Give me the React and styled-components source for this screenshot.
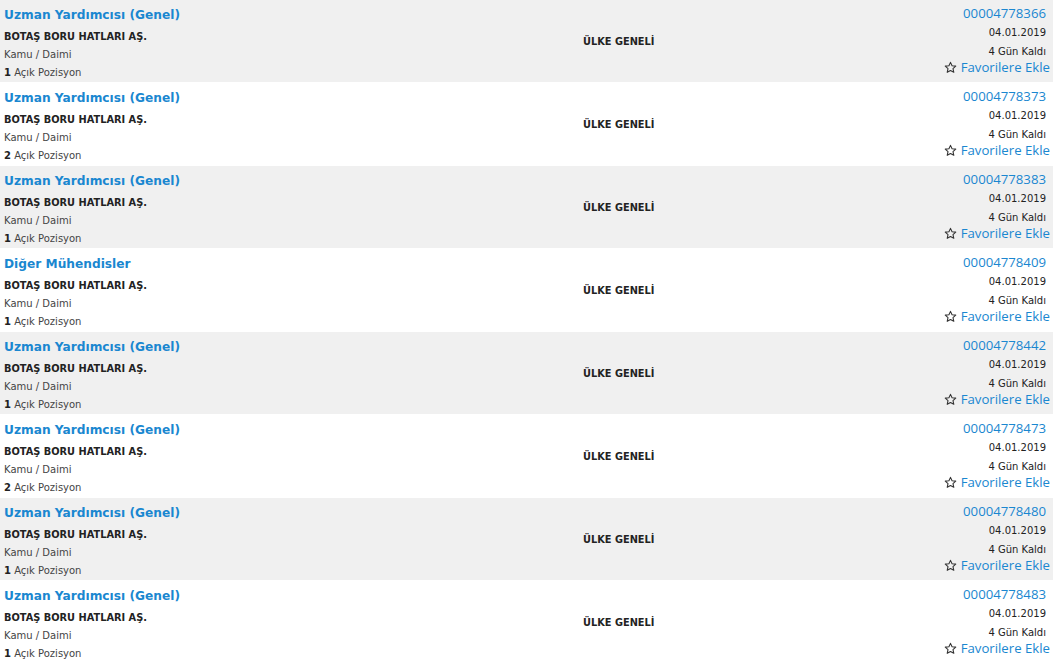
import React from "react";
import styled, { createGlobalStyle } from "styled-components";

const Global = createGlobalStyle`
  html, body { margin: 0; padding: 0; background: #fff; }
  body { font-family: "DejaVu Sans", Verdana, sans-serif; color: #222; }
`;

const List = styled.div`
  width: 1053px;
  display: flex;
  flex-direction: column;
`;

const Row = styled.div`
  height: 82px;
  border-bottom: 1px solid #fff;
  background: ${(p) => (p.$alt ? "#f0f0f0" : "#fff")};
  display: grid;
  grid-template-columns: 583px 1fr auto;
  align-items: stretch;
`;

const Left = styled.div`
  padding: 6px 0 0 4px;
  display: flex;
  flex-direction: column;
`;

const Title = styled.a`
  font-family: "DejaVu Sans", Verdana, sans-serif;
  font-weight: bold;
  font-size: 12.2px;
  color: #1a87d0;
  text-decoration: none;
  line-height: 19px;
  height: 22px;
`;

const Small = styled.div`
  font-size: ${(p) => (p.$strong ? "9.8px" : "10px")};
  line-height: 18px;
  color: ${(p) => (p.$strong ? "#222" : "#444")};
  font-weight: ${(p) => (p.$strong ? "bold" : "normal")};
  b { color: #222; font-size: 10px; }
`;

const Middle = styled.div`
  display: flex;
  align-items: center;
  font-size: 9.8px;
  font-weight: bold;
  color: #222;
`;

const Right = styled.div`
  padding: 4px 3px 0 0;
  display: flex;
  flex-direction: column;
  align-items: flex-end;
`;

const Code = styled.a`
  font-family: "Open Sans", sans-serif;
  font-size: 13.2px;
  line-height: 18px;
  height: 18px;
  padding-right: 4px;
  color: #1a87d0;
  text-decoration: none;
`;

const Meta = styled.div`
  font-size: 10px;
  line-height: 18px;
  color: #222;
  padding-right: 4px;
  margin-top: ${(p) => p.$mt || 0}px;
`;

const Fav = styled.a`
  font-family: "Open Sans", sans-serif;
  font-size: 13.2px;
  line-height: 18px;
  margin-top: -3px;
  color: #1a87d0;
  text-decoration: none;
  display: flex;
  align-items: center;
  gap: 4px;
  svg { display: block; }
`;

const Star = () => (
  <svg width="13" height="13" viewBox="0 0 24 24" fill="none" stroke="#333" strokeWidth="2" strokeLinejoin="round">
    <path d="M12 2.5l2.9 6.3 6.8.7-5.1 4.6 1.5 6.8L12 17.4 5.9 20.9l1.5-6.8L2.3 9.5l6.8-.7z" />
  </svg>
);

const items = [
  { t: "Uzman Yardımcısı (Genel)", n: 1, c: "00004778366" },
  { t: "Uzman Yardımcısı (Genel)", n: 2, c: "00004778373" },
  { t: "Uzman Yardımcısı (Genel)", n: 1, c: "00004778383" },
  { t: "Diğer Mühendisler", n: 1, c: "00004778409" },
  { t: "Uzman Yardımcısı (Genel)", n: 1, c: "00004778442" },
  { t: "Uzman Yardımcısı (Genel)", n: 2, c: "00004778473" },
  { t: "Uzman Yardımcısı (Genel)", n: 1, c: "00004778480" },
  { t: "Uzman Yardımcısı (Genel)", n: 1, c: "00004778483" },
];

export default function App() {
  return (
    <>
      <Global />
      <List>
        {items.map((it, i) => (
          <Row key={i} $alt={i % 2 === 0}>
            <Left>
              <Title href="#">{it.t}</Title>
              <Small $strong>BOTAŞ BORU HATLARI AŞ.</Small>
              <Small>Kamu / Daimi</Small>
              <Small><b>{it.n}</b> Açık Pozisyon</Small>
            </Left>
            <Middle>ÜLKE GENELİ</Middle>
            <Right>
              <Code href="#">{it.c}</Code>
              <Meta $mt={2}>04.01.2019</Meta>
              <Meta $mt={1}>4 Gün Kaldı</Meta>
              <Fav href="#"><Star />Favorilere Ekle</Fav>
            </Right>
          </Row>
        ))}
      </List>
    </>
  );
}
